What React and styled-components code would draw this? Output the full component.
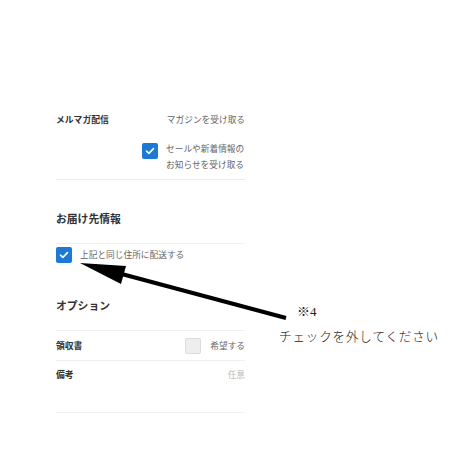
import React from 'react';
import styled, { createGlobalStyle } from 'styled-components';

const Global = createGlobalStyle`
  html, body {
    margin: 0;
    padding: 0;
    background: #fff;
  }
  body {
    font-family: "Noto Sans CJK JP", "Noto Sans", sans-serif;
  }
`;

const Page = styled.div`
  position: relative;
  width: 460px;
  height: 460px;
  overflow: hidden;
  background: #fff;
`;

const Form = styled.div`
  display: flex;
  flex-direction: column;
  width: 189px;
  margin-left: 56px;
  padding-top: 111px;
`;

const MailBlock = styled.div`
  display: flex;
  flex-direction: column;
  padding-bottom: 6px;
  border-bottom: 1px solid #ececec;
`;

const Row = styled.div`
  display: flex;
  align-items: center;
  justify-content: space-between;
  height: ${p => p.h || 18}px;
`;

const Label = styled.span`
  font-size: 8.8px;
  font-weight: 700;
  color: #333;
  line-height: 16px;
`;

const Value = styled.span`
  font-size: 8.7px;
  color: ${p => p.light ? '#bdbdbd' : '#666'};
  line-height: 16px;
  white-space: nowrap;
`;

const CheckLine = styled.div`
  display: flex;
  align-items: flex-start;
  gap: 8px;
  margin-top: ${p => p.mt || 0}px;
  padding-left: ${p => p.indent || 0}px;
  padding-top: ${p => p.pt || 0}px;
`;

const Box = styled.span`
  flex: none;
  display: flex;
  align-items: center;
  justify-content: center;
  width: 16px;
  height: 16px;
  border-radius: 2px;
  box-sizing: border-box;
  margin-top: ${p => p.mt || 0}px;
  background: ${p => p.checked ? '#1c79d6' : '#eeeeee'};
  border: ${p => p.checked ? 'none' : '1px solid #dcdcdc'};
`;

const CheckText = styled.span`
  font-size: 8.7px;
  line-height: 16px;
  color: #666;
  white-space: nowrap;
`;

const Heading = styled.div`
  font-size: 10.8px;
  font-weight: 700;
  color: #333;
  line-height: 16px;
  margin-top: ${p => p.mt}px;
  padding-bottom: 17px;
  border-bottom: 1px solid #efefef;
`;

const OptRow = styled.div`
  display: flex;
  align-items: ${p => p.top ? 'flex-start' : 'center'};
  justify-content: space-between;
  height: ${p => p.h}px;
  padding-top: ${p => p.top ? 6 : 0}px;
  box-sizing: border-box;
  border-bottom: 1px solid #efefef;
`;

const Right = styled.div`
  display: flex;
  align-items: center;
  gap: 9px;
`;

const Note = styled.div`
  position: absolute;
  left: 279px;
  top: 303px;
  font-family: "Liberation Serif", "Noto Sans CJK JP", serif;
  color: #222;
`;

const NoteNum = styled.div`
  margin-left: 18px;
  font-size: 13px;
  line-height: 18px;
`;

const NoteText = styled.div`
  margin-top: 8px;
  font-size: 12.6px;
  font-weight: 300;
  letter-spacing: 0.8px;
  line-height: 16px;
  white-space: nowrap;
`;

const Overlay = styled.svg`
  position: absolute;
  left: 0;
  top: 0;
  pointer-events: none;
`;

function Check() {
  return (
    <svg width="10" height="8" viewBox="0 0 10 8">
      <path d="M1.5 4.2 L3.9 6.4 L8.5 1.6" fill="none" stroke="#fff" strokeWidth="1.6" strokeLinecap="round" strokeLinejoin="round" />
    </svg>
  );
}

export default function App() {
  return (
    <Page>
      <Global />
      <Form>
        <MailBlock>
          <Row>
            <Label>メルマガ配信</Label>
            <Value>マガジンを受け取る</Value>
          </Row>
          <CheckLine mt={12} indent={86}>
            <Box checked mt={2}><Check /></Box>
            <CheckText>セールや新着情報の<br />お知らせを受け取る</CheckText>
          </CheckLine>
        </MailBlock>

        <Heading mt={30}>お届け先情報</Heading>
        <CheckLine pt={3}>
          <Box checked><Check /></Box>
          <CheckText>上記と同じ住所に配送する</CheckText>
        </CheckLine>

        <Heading mt={34}>オプション</Heading>
        <OptRow h={30}>
          <Label>領収書</Label>
          <Right>
            <Box />
            <Value>希望する</Value>
          </Right>
        </OptRow>
        <OptRow h={52} top>
          <Label>備考</Label>
          <Value light>任意</Value>
        </OptRow>
      </Form>

      <Note>
        <NoteNum>※4</NoteNum>
        <NoteText>チェックを外してください</NoteText>
      </Note>

      <Overlay width="460" height="460">
        <line x1="286" y1="318" x2="118" y2="273" stroke="#000" strokeWidth="4" />
        <polygon points="80,263 126,266 121,284" fill="#000" />
      </Overlay>
    </Page>
  );
}
